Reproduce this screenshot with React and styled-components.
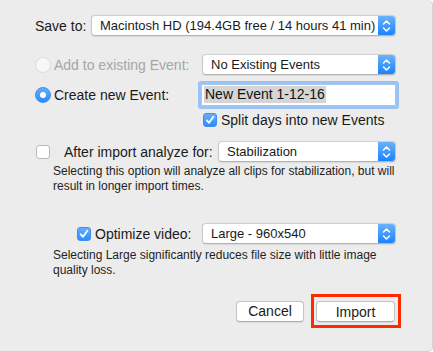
import React from 'react'
import styled, { createGlobalStyle } from 'styled-components'

const Global = createGlobalStyle`
  html, body {
    margin: 0;
    padding: 0;
    background: #ffffff;
  }
  body {
    font-family: "Helvetica Neue", "Liberation Sans", Arial, sans-serif;
    font-size: 13px;
    color: #1a1a1a;
  }
`

function Stepper() {
  return (
    <StepperBox>
      <svg width="9" height="14" viewBox="0 0 9 14" fill="none" stroke="#fff" strokeWidth="1.5" strokeLinecap="round" strokeLinejoin="round">
        <path d="M1.5 5 L4.5 2 L7.5 5" />
        <path d="M1.5 9 L4.5 12 L7.5 9" />
      </svg>
    </StepperBox>
  )
}

function PopUp({ children }) {
  return (
    <Select>
      <SelectText>{children}</SelectText>
      <Stepper />
    </Select>
  )
}

function Check({ checked }) {
  return (
    <CheckBox checked={checked}>
      {checked && (
        <svg width="10" height="10" viewBox="0 0 10 10" fill="none" stroke="#fff" strokeWidth="1.8" strokeLinecap="round" strokeLinejoin="round">
          <path d="M1.8 5.4 L4 7.8 L8.4 1.8" />
        </svg>
      )}
    </CheckBox>
  )
}

export default function App() {
  return (
    <>
      <Global />
      <Dialog>
        <Row top={15} left={35}>
          <Label width={56} indent={0}>Save to:</Label>
          <PopUp>Macintosh HD (194.4GB free / 14 hours 41 min)</PopUp>
        </Row>

        <Row top={18} left={35}>
          <Radio disabled />
          <Label width={151} indent={3} disabled>Add to existing Event:</Label>
          <PopUp>No Existing Events</PopUp>
        </Row>

        <Row top={9} left={35}>
          <Radio selected />
          <Label width={147} indent={3}>Create new Event:</Label>
          <Field>
            <Selected>New Event 1-12-16</Selected>
          </Field>
        </Row>

        <Row top={7} left={203} height={16}>
          <Check checked />
          <Label indent={4}>Split days into new Events</Label>
        </Row>

        <Row top={13} left={36}>
          <Check />
          <Label width={168} indent={14}>After import analyze for:</Label>
          <PopUp>Stabilization</PopUp>
        </Row>

        <Note top={2}>
          Selecting this option will analyze all clips for stabilization, but will
          <br />
          result in longer import times.
        </Note>

        <Row top={29} left={77}>
          <Check checked />
          <Label width={111} indent={4}>Optimize video:</Label>
          <PopUp>Large - 960x540</PopUp>
        </Row>

        <Note top={4}>
          Selecting Large significantly reduces file size with little image
          <br />
          quality loss.
        </Note>

        <Buttons>
          <Button width={68}>Cancel</Button>
          <Highlight>
            <Button width={79}>Import</Button>
          </Highlight>
        </Buttons>
      </Dialog>
    </>
  )
}

// ---- dialog frame
const Dialog = styled.div`
  box-sizing: border-box;
  width: 433px;
  height: 352px;
  background: #ececec;
  border-right: 1px solid #d2d2d2;
  border-bottom: 1px solid #cfcfcf;
  border-radius: 0 5px 5px 0;
  display: flex;
  flex-direction: column;
`

// ---- form row
const Row = styled.div`
  display: flex;
  align-items: center;
  height: ${p => p.height || 21}px;
  margin-top: ${p => p.top}px;
  padding-left: ${p => p.left}px;
  padding-right: 36px;
`

const Label = styled.span`
  flex: none;
  box-sizing: border-box;
  width: ${p => (p.width ? p.width + 'px' : 'auto')};
  padding-left: ${p => p.indent}px;
  white-space: nowrap;
  color: ${p => (p.disabled ? '#a6a6a6' : '#1a1a1a')};
  font-size: 14px;
  line-height: 16px;
`

// ---- pop up button
const Select = styled.div`
  flex: 1;
  min-width: 0;
  display: flex;
  align-items: stretch;
  height: 21px;
  box-sizing: border-box;
  background: #fff;
  border: 1px solid #c6c6c6;
  border-top-color: #d0d0d0;
  border-bottom-color: #b3b3b3;
  border-radius: 4px;
  box-shadow: 0 0.5px 1px rgba(0, 0, 0, 0.08);
  overflow: hidden;
`

const SelectText = styled.span`
  flex: 1;
  padding-left: 8px;
  line-height: 19px;
  white-space: nowrap;
  font-size: 13px;
  color: #1a1a1a;
`

const StepperBox = styled.span`
  flex: none;
  width: 17px;
  display: flex;
  align-items: center;
  justify-content: center;
  background: linear-gradient(#6bb2fb, #1a83fd);
`

// ---- radio & checkbox
const Radio = styled.span`
  flex: none;
  box-sizing: border-box;
  width: 16px;
  height: 16px;
  border-radius: 50%;
  display: flex;
  align-items: center;
  justify-content: center;
  background: ${p => (p.selected ? 'linear-gradient(#64adfa, #2a8cfc)' : '#f7f7f7')};
  border: 1px solid ${p => (p.selected ? '#3e8ef0' : '#dcdcdc')};
  &::after {
    content: '';
    display: ${p => (p.selected ? 'block' : 'none')};
    width: 6px;
    height: 6px;
    border-radius: 50%;
    background: #fff;
  }
`

const CheckBox = styled.span`
  flex: none;
  box-sizing: border-box;
  width: 14px;
  height: 14px;
  border-radius: 3px;
  display: flex;
  align-items: center;
  justify-content: center;
  background: ${p => (p.checked ? 'linear-gradient(#66aefa, #2d8dfc)' : '#fff')};
  border: 1px solid ${p => (p.checked ? '#3e8ef0' : '#b9b9b9')};
`

// ---- text field
const Field = styled.div`
  flex: 1;
  margin-left: 3px;
  height: 22px;
  box-sizing: border-box;
  background: #fff;
  border: 1px solid #a9c6ee;
  box-shadow: 0 0 0 3px #9cc2f3;
  border-radius: 1px;
  display: flex;
  align-items: center;
  padding-left: 2px;
`

const Selected = styled.span`
  background: #d5d5d5;
  line-height: 17px;
  padding: 0 1px;
  font-size: 14px;
  color: #111;
  white-space: nowrap;
`

// ---- help text
const Note = styled.p`
  margin: ${p => p.top}px 0 0 0;
  padding-left: 53px;
  font-size: 12px;
  line-height: 15px;
  color: #1e1e1e;
  white-space: nowrap;
`

// ---- buttons
const Buttons = styled.div`
  display: flex;
  justify-content: flex-end;
  align-items: center;
  gap: 7px;
  margin-top: 16px;
  padding-right: 31px;
`

const Button = styled.button`
  box-sizing: border-box;
  width: ${p => p.width}px;
  height: 21px;
  padding: 0;
  background: #fff;
  border: 1px solid #c4c4c4;
  border-bottom-color: #aeaeae;
  border-radius: 4px;
  box-shadow: 0 0.5px 1px rgba(0, 0, 0, 0.08);
  font-family: "Helvetica Neue", "Liberation Sans", Arial, sans-serif;
  font-size: 14px;
  color: #1a1a1a;
`

const Highlight = styled.div`
  box-sizing: border-box;
  border: 3px solid #fe2a00;
  padding: 4px 3px 3px 2px;
  display: flex;
`
